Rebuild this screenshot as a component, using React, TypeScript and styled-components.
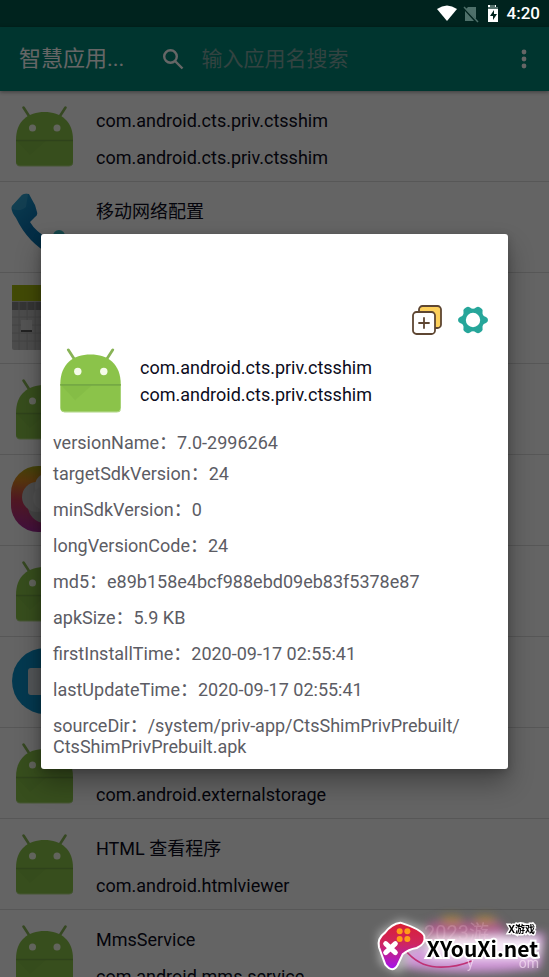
import React from "react";
import styled, { createGlobalStyle } from "styled-components";

const GlobalStyle = createGlobalStyle`
  * { box-sizing: border-box; }
  body { margin: 0; background: #fafafa; }
  body, button, input { font-family: Roboto, "Noto Sans CJK SC", sans-serif; }
`;

const Screen = styled.div`
  position: relative;
  height: 100vh;
  overflow: hidden;
  display: flex;
  flex-direction: column;
  font-size: 18px;
  line-height: 21px;
  color: #0c0c20;
`;

const StatusBar = styled.div`
  flex: none;
  display: flex;
  align-items: center;
  justify-content: flex-end;
  height: 27px;
  padding-right: 9px;
  background: #00574b;
`;

const StatusIcons = styled.div`
  position: relative;
  z-index: 3;
  display: flex;
  align-items: center;
  color: #fff;
  font-size: 17px;
  font-weight: 500;

  svg { display: block; margin-right: 6px; }
`;

const Toolbar = styled.header`
  flex: none;
  display: flex;
  align-items: center;
  height: 64px;
  padding: 0 15px 0 19px;
  background: #008577;
  color: #fff;
  box-shadow: 0 1px 4px rgba(0, 0, 0, 0.4);
  z-index: 1;
`;

const Title = styled.h1`
  margin: 0 38px 0 0;
  font-size: 22px;
  line-height: 28px;
  font-weight: 400;
  white-space: nowrap;
`;

const SearchLabel = styled.label`
  flex: 1;
  min-width: 0;
  display: flex;
  align-items: center;
  gap: 17px;

  svg { flex: none; }
`;

const SearchInput = styled.input`
  flex: 1;
  min-width: 0;
  padding: 0;
  border: 0;
  outline: 0;
  background: transparent;
  color: #fff;
  font-size: 21px;
  line-height: 28px;

  &::placeholder { color: #7fa9a3; opacity: 1; }
`;

const IconButton = styled.button`
  display: flex;
  padding: 0;
  border: 0;
  background: none;
  color: inherit;
`;

const AppList = styled.ul`
  flex: 1;
  min-height: 0;
  margin: 0;
  padding: 0;
  overflow: hidden;
  list-style: none;
`;

const AppRow = styled.li`
  display: flex;
  gap: 19px;
  height: 91px;
  padding: 11px;
  border-bottom: 1px solid #dadada;
`;

const RowText = styled.div`
  display: grid;
  grid-template-rows: 21px 21px;
  gap: 16px;
  padding-top: 8px;
  white-space: nowrap;
`;

const Scrim = styled.div`
  position: absolute;
  inset: 0;
  z-index: 2;
  display: flex;
  align-items: center;
  justify-content: center;
  padding: 26px 41px 0;
  background: rgba(0, 0, 0, 0.6);
`;

const Dialog = styled.section`
  flex: 1;
  padding: 70px 12px 12px;
  border-radius: 3px;
  background: #fff;
  box-shadow: 0 14px 26px rgba(0, 0, 0, 0.32), 0 2px 8px rgba(0, 0, 0, 0.2);
`;

const Actions = styled.div`
  display: flex;
  justify-content: flex-end;
  gap: 14px;
  padding-right: 7px;
`;

const AppHeader = styled.div`
  display: flex;
  align-items: center;
  gap: 15px;
  margin: 8px 0 18px 2px;
`;

const AppNames = styled.div`
  padding-top: 4px;
`;

const AppName = styled.h2`
  margin: 0;
  font-size: 18px;
  line-height: 27px;
  font-weight: 400;
`;

const Details = styled.dl`
  display: grid;
  gap: 15px;
  margin: 0;
  color: #5c5c64;
`;

const Detail = styled.div<{ $tight?: boolean }>`
  margin-bottom: ${(p) => (p.$tight ? "-5px" : "0")};

  dt, dd { display: inline; margin: 0; }
`;

const Watermark = styled.div`
  position: absolute;
  right: 0;
  bottom: 0;
  z-index: 3;
  width: 199px;
  height: 87px;

  svg { display: block; }
`;

const Brand = styled.div`
  position: absolute;
  right: 11px;
  bottom: 16px;
  color: #000;
  font: 700 21px/26px "Noto Sans CJK SC", sans-serif;
  -webkit-text-stroke: 4px #fff;
  paint-order: stroke fill;
`;

const BrandTag = styled.div`
  position: absolute;
  right: 14px;
  top: 32px;
  color: #000;
  font: 700 10px/14px "Noto Sans", "Noto Sans CJK SC", sans-serif;
  -webkit-text-stroke: 3px #fff;
  paint-order: stroke fill;
`;

const FaintText = styled.div<{ $low?: boolean }>`
  position: absolute;
  left: ${(p) => (p.$low ? "117px" : "74px")};
  right: ${(p) => (p.$low ? "10px" : "auto")};
  bottom: ${(p) => (p.$low ? "4px" : "34px")};
  display: flex;
  justify-content: space-between;
  color: ${(p) => (p.$low ? "rgba(255, 235, 250, 0.6)" : "rgba(255, 210, 230, 0.22)")};
  font-size: ${(p) => (p.$low ? "14px" : "20px")};
  line-height: 20px;
`;

function AndroidIcon({ size = 66 }: { size?: number }) {
  return (
    <svg width={size} height={size} viewBox="0 0 66 66" fill="none" aria-hidden="true">
      <path d="M12.5 5.5 18 14M54.500 5.500 49 14" stroke="#88b356" strokeWidth="2.600" strokeLinecap="round" />
      <path d="M5 38C5 19 17 10 33.500 10S62 19 62 38V60Q62 64 58 64H9Q5 64 5 60Z" fill="#8bc34a" />
      <path d="M5 38 19 53 36 38Z" fill="#7fb642" opacity=".45" />
      <path d="M5 38.500H62" stroke="#75a944" strokeWidth="1.500" />
      <path d="M6 62.500Q7 64 9 64H58Q61 64 61.500 62" stroke="#aed581" />
      <circle cx="21.500" cy="26" r="3.500" fill="#f5fbe9" />
      <circle cx="46" cy="26" r="3.500" fill="#f5fbe9" />
    </svg>
  );
}

function PhoneIcon() {
  return (
    <svg width="66" height="66" viewBox="0 0 66 66" aria-hidden="true">
      <defs>
        <linearGradient id="handset" x1="0" y1="0" x2="1" y2="1">
          <stop stopColor="#1f9ccd" /><stop offset=".4" stopColor="#0a72ad" /><stop offset="1" stopColor="#0672a8" />
        </linearGradient>
      </defs>
      <path d="M1 13 11 2Q14 0 18 1Q20 5 24 12L26 19Q27 22 24 24L19 29Q24 38 39 47L46 41Q49 39 51 41L63 50Q65 52 63 54L53 64Q49 67 40 62Q17 50 5 25Q-1 17 1 13Z" fill="url(#handset)" />
      <path d="M1 13 11 2Q14 0 17 1L15 14Q10 19 1 16Z" fill="#46abd2" opacity=".5" />
      <circle cx="48" cy="43" r="6" fill="#38b5bd" />
    </svg>
  );
}

function CalendarIcon() {
  return (
    <svg width="66" height="66" viewBox="0 0 66 66" aria-hidden="true">
      <rect x="1" y="1" width="64" height="65" rx="2" fill="#bdbdbd" />
      <path d="M1 1H65V17H1Z" fill="#a5ba10" />
      <path d="M1 18H65V26H1Z" fill="#858585" />
      <path d="M1 33H65M1 41H65M1 49H65M1 57H65M8 18V66M16 18V66M24 18V66M32 18V66M40 18V66M48 18V66M56 18V66" stroke="#a8a8a8" />
      <path d="M10 36H21V47H10Z" fill="#d2d2d2" />
      <path d="M10 47H21" stroke="#555" strokeWidth="2" />
    </svg>
  );
}

function GalleryIcon() {
  return (
    <svg width="66" height="66" viewBox="0 0 66 66" aria-hidden="true">
      <defs>
        <linearGradient id="petals" x1=".5" y1="0" x2=".4" y2="1">
          <stop stopColor="#a5ac18" /><stop offset=".25" stopColor="#d98622" /><stop offset=".55" stopColor="#c93d57" /><stop offset="1" stopColor="#a52a9a" />
        </linearGradient>
      </defs>
      <rect y="0" width="66" height="66" rx="27" fill="url(#petals)" />
      <circle cx="34" cy="40" r="17" fill="#a9a9a9" />
      <circle cx="26" cy="31" r="15" fill="#bcbcbc" />
      <circle cx="37" cy="20" r="13" fill="#cfcfcf" />
      <circle cx="34" cy="32" r="12" fill="#c8c8c8" />
    </svg>
  );
}

function BlueIcon() {
  return (
    <svg width="66" height="66" viewBox="0 0 66 66" aria-hidden="true">
      <circle cx="34" cy="33" r="33" fill="#0c8fc8" />
      <rect x="17" y="20" width="34" height="27" rx="3" fill="#cfd8dc" />
    </svg>
  );
}

const icons = {
  android: AndroidIcon,
  phone: PhoneIcon,
  calendar: CalendarIcon,
  gallery: GalleryIcon,
  blue: BlueIcon,
};

const apps: { icon: keyof typeof icons; name?: string; pkg?: string }[] = [
  { icon: "android", name: "com.android.cts.priv.ctsshim", pkg: "com.android.cts.priv.ctsshim" },
  { icon: "phone", name: "移动网络配置" },
  { icon: "calendar" },
  { icon: "android" },
  { icon: "gallery" },
  { icon: "android" },
  { icon: "blue" },
  { icon: "android", pkg: "com.android.externalstorage" },
  { icon: "android", name: "HTML 查看程序", pkg: "com.android.htmlviewer" },
  { icon: "android", name: "MmsService", pkg: "com.android.mms.service" },
];

const details = [
  ["versionName", "7.0-2996264"],
  ["targetSdkVersion", "24"],
  ["minSdkVersion", "0"],
  ["longVersionCode", "24"],
  ["md5", "e89b158e4bcf988ebd09eb83f5378e87"],
  ["apkSize", "5.9 KB"],
  ["firstInstallTime", "2020-09-17 02:55:41"],
  ["lastUpdateTime", "2020-09-17 02:55:41"],
  ["sourceDir", "/system/priv-app/CtsShimPrivPrebuilt/\u200bCtsShimPrivPrebuilt.apk"],
];

function StatusGlyphs() {
  return (
    <svg width="64" height="18" viewBox="0 0 64 18" aria-hidden="true">
      <path d="M0 4Q10-3 20 4L10 16Z" fill="#fff" />
      <path d="M31 2H39V14L29 4ZM28 6 37 16H28Z" fill="#4e706a" />
      <path d="m27 2 14 15" stroke="#4e706a" strokeWidth="1.500" />
      <path d="M51 2V0H59V2H61V17H51Z" fill="#fff" />
      <path d="M53 0H58V2H61V4H51V2H53Z" fill="#55716c" />
      <path d="m57 5-4 6h3v4l4-6h-3Z" fill="#00231e" />
    </svg>
  );
}

function WatermarkArt() {
  return (
    <svg width="199" height="87" viewBox="0 0 597 261" aria-hidden="true">
      <defs>
        <filter id="soft" x="-30%" y="-60%" width="160%" height="220%"><feGaussianBlur stdDeviation="14" /></filter>
        <linearGradient id="pad" x1="0" y1="0" x2="0" y2="1">
          <stop stopColor="#d91f33" /><stop offset=".45" stopColor="#cf255f" /><stop offset="1" stopColor="#a413f0" />
        </linearGradient>
      </defs>
      <g filter="url(#soft)">
        <path d="M85 130 150 90 240 120 220 180 145 250 90 220Z" fill="#fff" opacity=".5" />
        <rect x="225" y="95" width="240" height="70" rx="30" fill="#b55d91" opacity=".9" />
        <ellipse cx="305" cy="91" rx="35" ry="10" fill="#b3892d" />
        <ellipse cx="405" cy="91" rx="35" ry="10" fill="#b3892d" />
        <path d="M170 180Q350 130 585 130L570 235Q360 260 170 235Z" fill="#dc9be4" opacity=".9" />
        <rect x="230" y="140" width="340" height="65" rx="25" fill="#fff" opacity=".8" />
      </g>
      <path d="M165 180Q205 228 260 231T365 213" fill="none" stroke="#bf3275" strokeWidth="5" />
      <path d="M151 98Q125 101 105 128Q81 145 87 172L106 224Q128 251 143 225L158 193Q175 178 200 174Q228 162 223 138Q216 119 151 98Z" fill="url(#pad)" stroke="#fff" strokeWidth="6" />
      <path d="m107 161 29 27m0-27-29 27" stroke="#fff" strokeWidth="15" strokeLinecap="round" />
      <g fill="#ff9d18">
        <circle cx="149" cy="124" r="9" /><circle cx="172" cy="124" r="9" />
        <circle cx="149" cy="147" r="9" /><circle cx="172" cy="147" r="9" />
      </g>
    </svg>
  );
}

export default function App() {
  return (
    <Screen lang="zh-CN">
      <GlobalStyle />
      <StatusBar>
        <StatusIcons><StatusGlyphs /><span>4:20</span></StatusIcons>
      </StatusBar>
      <Toolbar>
        <Title>智慧应用...</Title>
        <SearchLabel>
          <svg width="22" height="22" viewBox="0 0 22 22" fill="none" stroke="#fff" strokeWidth="2.400" aria-hidden="true">
            <circle cx="8.500" cy="8.500" r="6.300" /><path d="m13 13 7.500 7.500" />
          </svg>
          <SearchInput type="text" aria-label="输入应用名搜索" placeholder="输入应用名搜索" />
        </SearchLabel>
        <IconButton type="button" aria-label="更多">
          <svg width="20" height="24" viewBox="0 0 20 24" fill="#fff" aria-hidden="true">
            <circle cx="10" cy="5" r="2.400" /><circle cx="10" cy="12" r="2.400" /><circle cx="10" cy="19" r="2.400" />
          </svg>
        </IconButton>
      </Toolbar>
      <AppList>
        {apps.map((app, i) => {
          const Icon = icons[app.icon];
          return (
            <AppRow key={i}>
              <Icon />
              <RowText><span>{app.name}</span><span>{app.pkg}</span></RowText>
            </AppRow>
          );
        })}
      </AppList>
      <Scrim>
        <Dialog role="dialog" aria-labelledby="app-name">
          <Actions>
            <IconButton type="button" aria-label="添加">
              <svg width="32" height="32" viewBox="0 0 32 32" stroke="#5e4632" strokeWidth="1.800" strokeLinecap="round" aria-hidden="true">
                <rect x="8" y="2" width="22" height="22" rx="3.500" fill="#fdd05b" />
                <rect x="2" y="8" width="22" height="22" rx="3.500" fill="#fff" />
                <path d="M13 14v10M8 19h10" />
              </svg>
            </IconButton>
            <IconButton type="button" aria-label="设置">
              <svg width="32" height="32" viewBox="0 0 32 32" aria-hidden="true">
                <path d="M9 3.500Q11 2 13 3.500Q16 6 19 3.500Q21 2 23 3.500L25 5Q26 6 25.500 8Q25 12 29 13Q31 14 31 16T29 19Q25 20 25.500 24Q26 26 25 27L23 28.500Q21 30 19 28.500Q16 26 13 28.500Q11 30 9 28.500L7 27Q6 26 6.500 24Q7 20 3 19Q1 18 1 16T3 13Q7 12 6.500 8Q6 6 7 5Z" fill="#26a69a" />
                <circle cx="16" cy="16" r="7.200" fill="#fff" />
              </svg>
            </IconButton>
          </Actions>
          <AppHeader>
            <AndroidIcon size={70} />
            <AppNames>
              <AppName id="app-name">com.android.cts.priv.ctsshim</AppName>
              <AppName as="div">com.android.cts.priv.ctsshim</AppName>
            </AppNames>
          </AppHeader>
          <Details>
            {details.map(([label, value], i) => (
              <Detail key={label} $tight={i === 0}><dt>{label}：</dt><dd>{value}</dd></Detail>
            ))}
          </Details>
        </Dialog>
      </Scrim>
      <Watermark>
        <WatermarkArt />
        <FaintText>2023游</FaintText>
        <FaintText $low><span>y</span><span>om</span></FaintText>
        <BrandTag>X游戏</BrandTag>
        <Brand>XYouXi.net</Brand>
      </Watermark>
    </Screen>
  );
}
